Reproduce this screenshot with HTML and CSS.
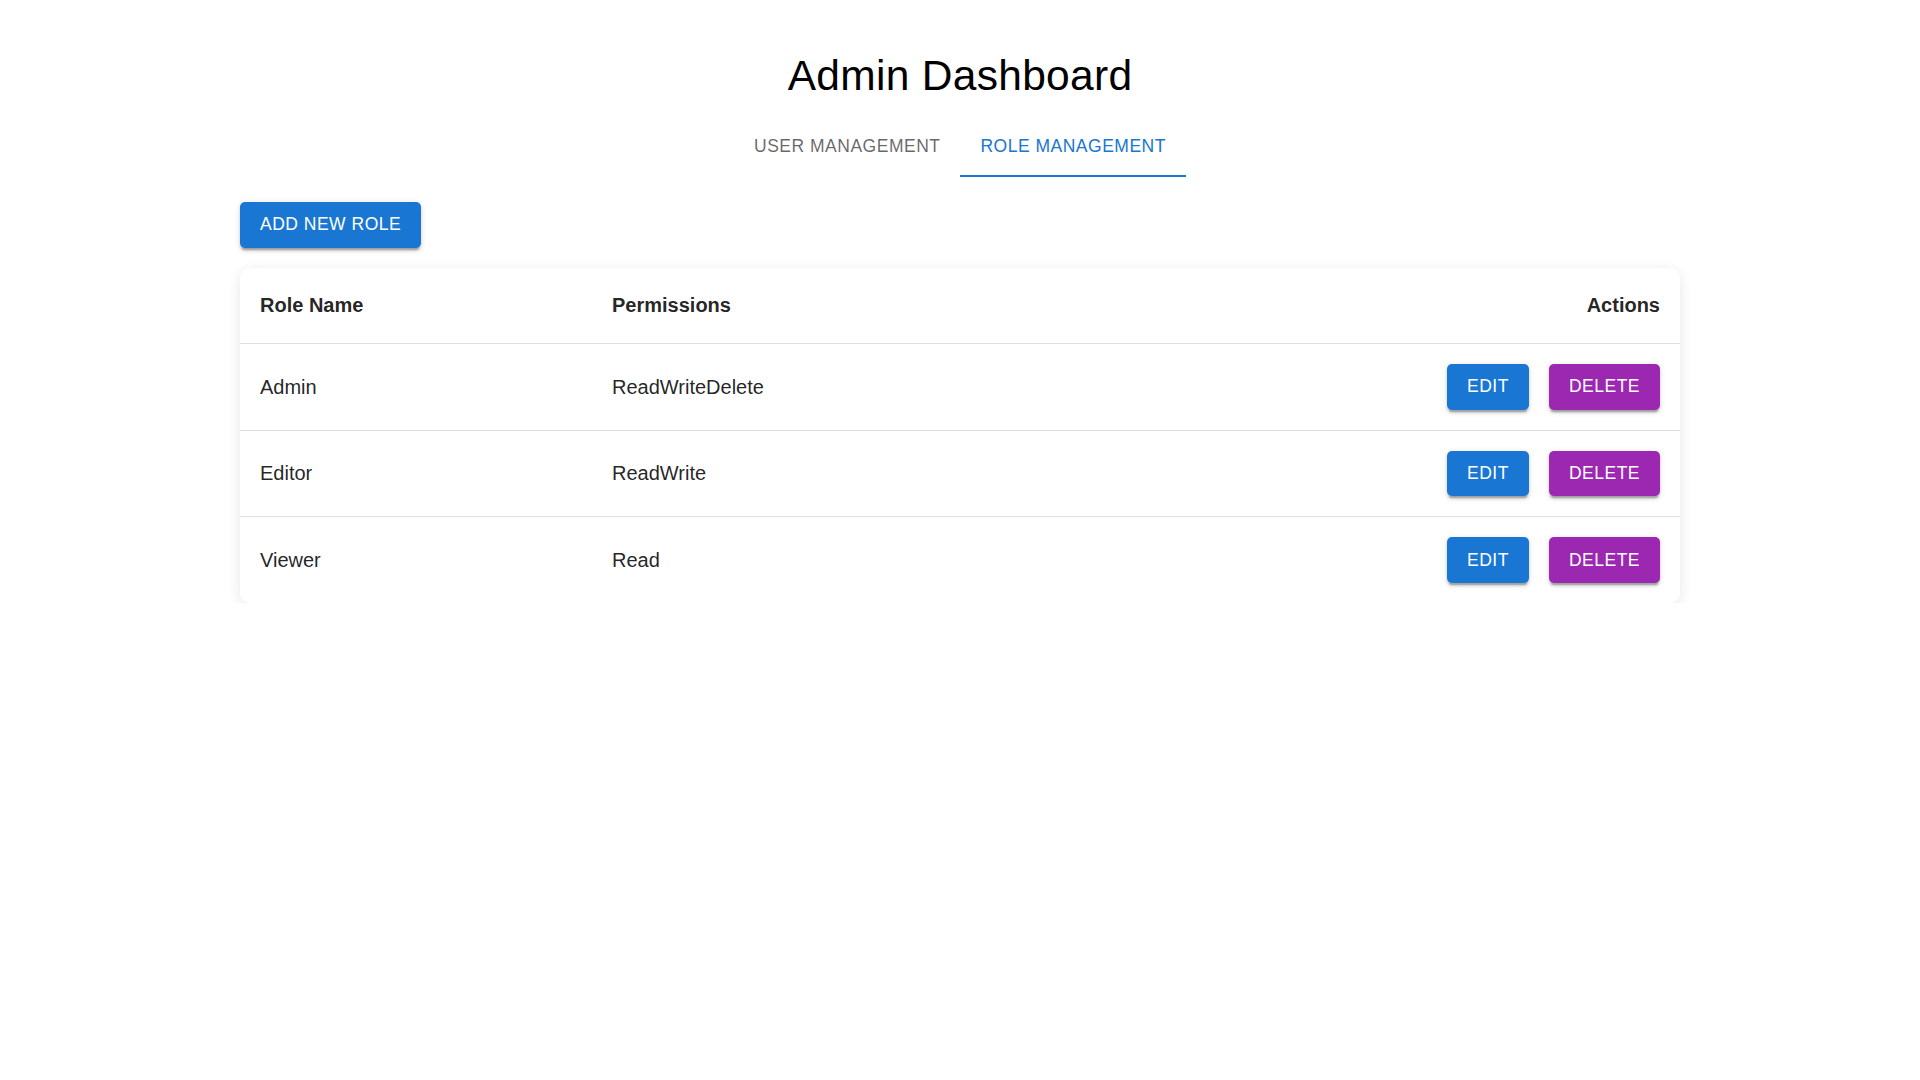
FILE: index.html
```html
<!DOCTYPE html>
<html lang="en">
<head>
<meta charset="utf-8">
<title>Admin Dashboard</title>
<link rel="stylesheet" href="styles.css">
</head>
<body>
<div class="container">
  <h1 class="title">Admin Dashboard</h1>
  <div class="tabs">
    <button class="tab">User Management</button>
    <button class="tab tab-active">Role Management</button>
  </div>
  <div class="toolbar">
    <button class="btn btn-primary">Add New Role</button>
  </div>
  <div class="paper">
    <table class="table">
      <thead>
        <tr>
          <th class="col-name">Role Name</th>
          <th>Permissions</th>
          <th class="col-actions">Actions</th>
        </tr>
      </thead>
      <tbody>
        <tr>
          <td>Admin</td>
          <td>ReadWriteDelete</td>
          <td class="col-actions"><button class="btn btn-primary">Edit</button><button class="btn btn-secondary">Delete</button></td>
        </tr>
        <tr>
          <td>Editor</td>
          <td>ReadWrite</td>
          <td class="col-actions"><button class="btn btn-primary">Edit</button><button class="btn btn-secondary">Delete</button></td>
        </tr>
        <tr>
          <td>Viewer</td>
          <td>Read</td>
          <td class="col-actions"><button class="btn btn-primary">Edit</button><button class="btn btn-secondary">Delete</button></td>
        </tr>
      </tbody>
    </table>
  </div>
</div>
</body>
</html>
```
FILE: styles.css
```css
* { box-sizing: border-box; }
html, body {
  margin: 0;
  padding: 0;
  background: #fff;
  font-family: "Liberation Sans", Arial, sans-serif;
  color: rgba(0,0,0,0.87);
}
.container {
  width: 1440px;
  margin: 0 auto;
  padding-top: 50px;
}
.title {
  margin: 0 0 14px 0;
  font-size: 42.5px;
  font-weight: 400;
  line-height: 52.5px;
  letter-spacing: 0.3px;
  text-align: center;
  color: #000;
}
.tabs {
  display: flex;
  justify-content: center;
  height: 60px;
}
.tab {
  font-family: inherit;
  background: none;
  border: 0;
  margin: 0;
  padding: 16px 20px 14px;
  min-height: 60px;
  font-size: 17.5px;
  line-height: 1.25;
  letter-spacing: 0.5px;
  text-transform: uppercase;
  color: rgba(0,0,0,0.6);
  border-bottom: 2.5px solid transparent;
  cursor: pointer;
}
.tab-active {
  color: #1976d2;
  border-bottom-color: #1976d2;
}
.toolbar {
  display: flex;
  margin-top: 25.5px;
  margin-bottom: 20.5px;
}
.btn {
  font-family: inherit;
  border: 0;
  border-radius: 5px;
  height: 45.6px;
  min-width: 80px;
  padding: 0 20px;
  font-size: 17.5px;
  font-weight: 500;
  letter-spacing: 0.5px;
  text-transform: uppercase;
  color: #fff;
  cursor: pointer;
  box-shadow: 0 3.75px 1.25px -2.5px rgba(0,0,0,0.2), 0 2.5px 2.5px 0 rgba(0,0,0,0.14), 0 1.25px 6.25px 0 rgba(0,0,0,0.12);
}
.btn-primary { background: #1976d2; }
.btn-secondary { background: #9c27b0; margin-left: 20px; }
.paper {
  background: #fff;
  border-radius: 10px;
  box-shadow: 0 3px 14px rgba(0,0,0,0.1);
  overflow: hidden;
}
.table {
  width: 100%;
  border-collapse: collapse;
}
.table th, .table td {
  padding: 20px;
  text-align: left;
  font-size: 20px;
  border-bottom: 1.25px solid #e0e0e0;
  vertical-align: middle;
}
.table th {
  font-weight: 700;
  line-height: 35px;
  color: rgba(0,0,0,0.87);
}
.table td {
  line-height: 28.6px;
}
.table tbody tr:last-child td { border-bottom: 0; }
.col-name { width: 352px; }
.table .col-actions {
  text-align: right;
  white-space: nowrap;
  width: 1%;
}
.table td.col-actions { font-size: 0; }
```
